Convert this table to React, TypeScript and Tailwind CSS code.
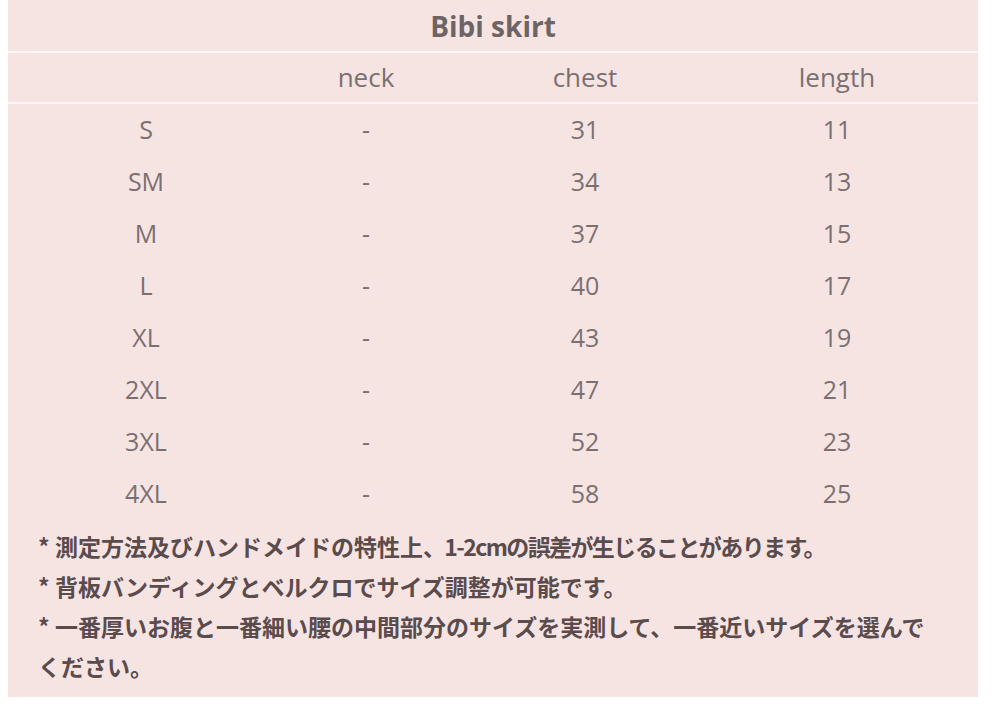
const rows = [
  { size: 'S', neck: '-', chest: '31', length: '11' },
  { size: 'SM', neck: '-', chest: '34', length: '13' },
  { size: 'M', neck: '-', chest: '37', length: '15' },
  { size: 'L', neck: '-', chest: '40', length: '17' },
  { size: 'XL', neck: '-', chest: '43', length: '19' },
  { size: '2XL', neck: '-', chest: '47', length: '21' },
  { size: '3XL', neck: '-', chest: '52', length: '23' },
  { size: '4XL', neck: '-', chest: '58', length: '25' },
];

const cols = 'grid grid-cols-[276px_164px_274px_230px] text-center';

export default function App() {
  return (
    <div className="w-[999px] h-[720px] bg-white pl-2 pr-[21px]">
      <div className="bg-[#f6e4e3] w-[970px] text-[#7b7071] font-['Open_Sans',sans-serif]">
        {/* title */}
        <div className="h-[51px] flex items-center justify-center text-[28px] font-bold text-[#6d6465]">
          Bibi skirt
        </div>
        <div className="h-[2px] bg-[#fdf5f4]" />

        {/* header */}
        <div className={`${cols} h-[49px] items-center text-[26px]`}>
          <span />
          <span>neck</span>
          <span>chest</span>
          <span>length</span>
        </div>
        <div className="h-[2px] bg-[#fdf5f4]" />

        {/* body */}
        <div className="flex flex-col">
          {rows.map((r) => (
            <div key={r.size} className={`${cols} h-[52px] items-center text-[25px]`}>
              <span>{r.size}</span>
              <span>{r.neck}</span>
              <span>{r.chest}</span>
              <span>{r.length}</span>
            </div>
          ))}
        </div>

        {/* notes */}
        <div className="pl-[30px] pr-[38px] pt-[6px] pb-[11px] text-[23px] leading-[40px] font-bold text-[#5a4b4d] font-['Noto_Sans_CJK_JP',sans-serif]">
          <p>
            * 測定方法及びハンドメイドの特性上
            <span className="tracking-[-1.6px]">、1-2cmの誤差が生じることがあります。</span>
          </p>
          <p>* 背板バンディングとベルクロでサイズ調整が可能です。</p>
          <p>* 一番厚いお腹と一番細い腰の中間部分のサイズを実測して、一番近いサイズを選んでください。</p>
        </div>
      </div>
    </div>
  );
}
